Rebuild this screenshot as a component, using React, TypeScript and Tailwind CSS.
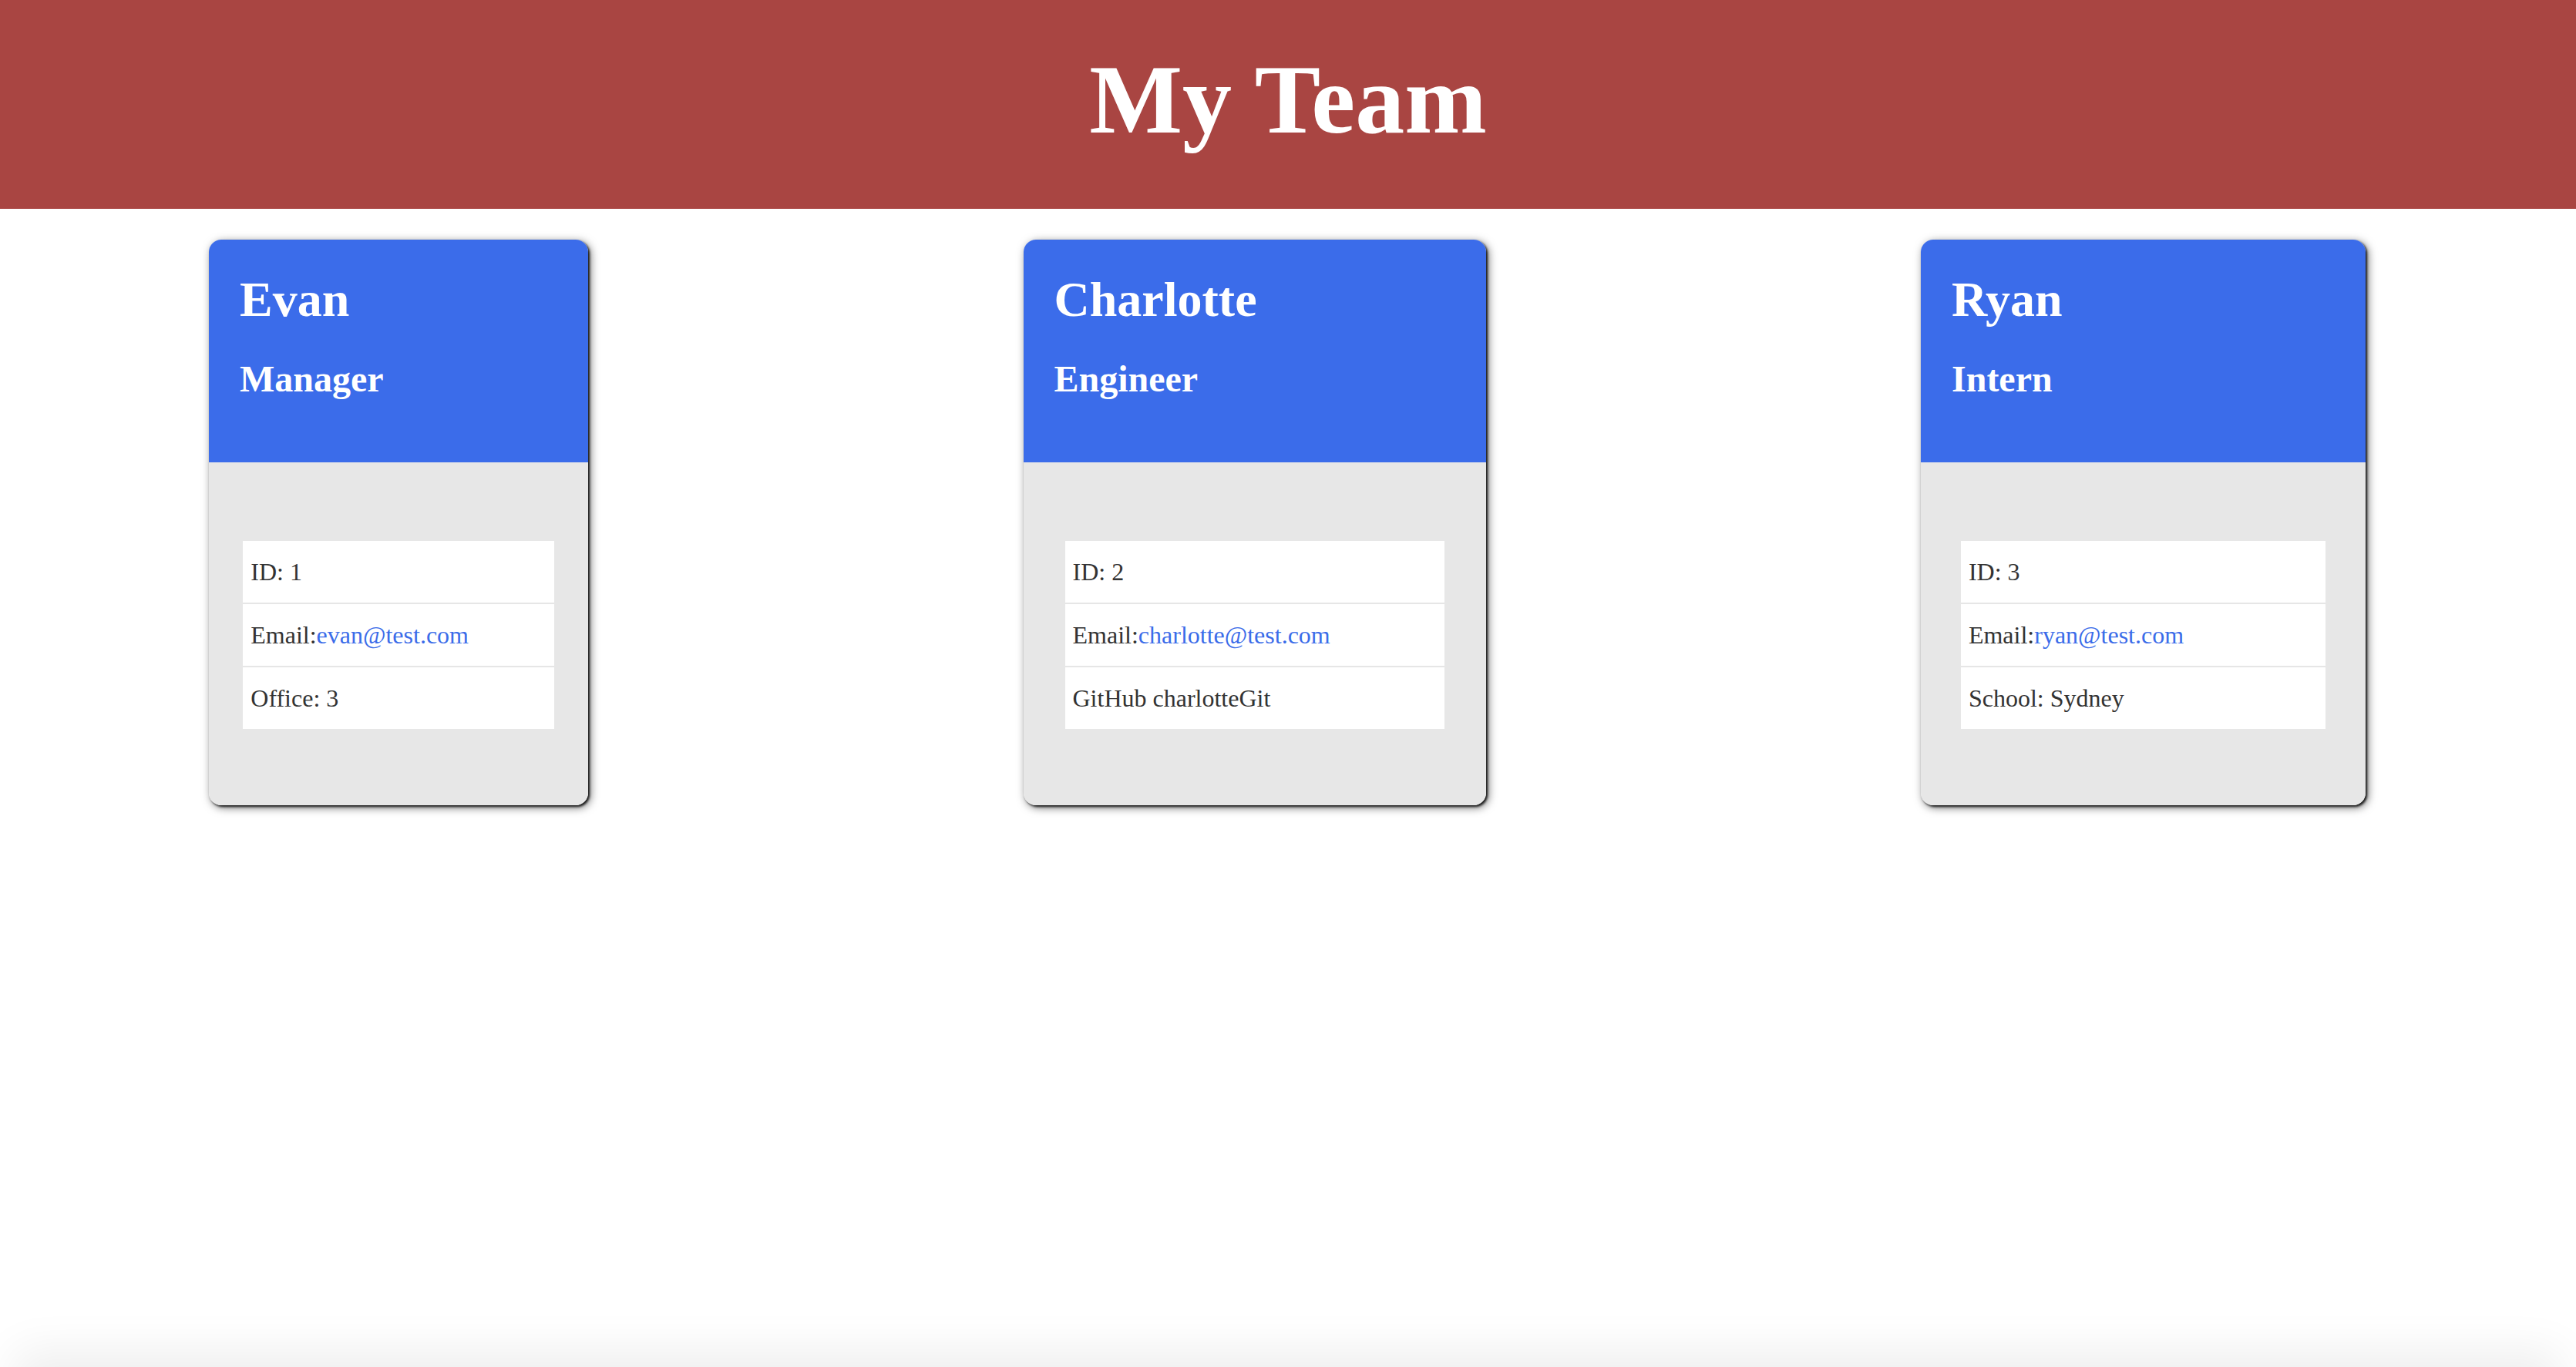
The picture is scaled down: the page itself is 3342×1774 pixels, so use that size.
import React from 'react';

type Member = {
  name: string;
  role: string;
  id: number;
  email: string;
  extra: string;
  width: string;
};

const team: Member[] = [
  { name: 'Evan', role: 'Manager', id: 1, email: 'evan@test.com', extra: 'Office: 3', width: 'w-[492px]' },
  { name: 'Charlotte', role: 'Engineer', id: 2, email: 'charlotte@test.com', extra: 'GitHub charlotteGit', width: 'w-[600px]' },
  { name: 'Ryan', role: 'Intern', id: 3, email: 'ryan@test.com', extra: 'School: Sydney', width: 'w-[577px]' },
];

function Card({ m }: { m: Member }) {
  return (
    <div
      className={`${m.width} flex flex-col overflow-hidden rounded-[16px] shadow-[2px_2px_3px_rgba(0,0,0,0.85),3px_3px_12px_rgba(0,0,0,0.55)]`}
    >
      {/* name + role */}
      <div className="h-[289px] bg-[#3b6cea] pl-[40px] pt-[41px] font-bold text-white">
        <h2 className="text-[64px] leading-[74px]">{m.name}</h2>
        <h3 className="mt-[38px] text-[48px] leading-[56px]">{m.role}</h3>
      </div>

      {/* details */}
      <div className="bg-[#e7e7e7] px-[9%] pt-[102px] pb-[99px]">
        <ul className="bg-white text-[32px] leading-[37px] text-[#333]">
          <li className="border-b-2 border-[#e6e6e6] pl-[10px] pt-[22px] pb-[21px]">ID: {m.id}</li>
          <li className="border-b-2 border-[#e6e6e6] pl-[10px] pt-[22px] pb-[21px]">
            Email:<a className="text-[#3b6ce9]">{m.email}</a>
          </li>
          <li className="pl-[10px] pt-[22px] pb-[21px]">{m.extra}</li>
        </ul>
      </div>
    </div>
  );
}

export default function App() {
  return (
    <div
      className="flex h-[1774px] flex-col overflow-hidden bg-white"
      style={{ fontFamily: '"Liberation Serif", "Times New Roman", serif' }}
    >
      <header className="h-[271px] shrink-0 bg-[#a94542] pt-[58px] text-center">
        <h1 className="text-[128px] font-bold leading-[142px] text-white">My Team</h1>
      </header>

      <main className="flex flex-1 items-start justify-between pl-[271px] pr-[273px] pt-[40px]">
        {team.map((m) => (
          <Card key={m.id} m={m} />
        ))}
      </main>

      {/* page edge shadow peeking in at the bottom */}
      <div className="mx-[40px] mb-[-100px] h-[100px] shrink-0 bg-white shadow-[0_0_60px_20px_rgba(0,0,0,0.07)]" />
    </div>
  );
}
